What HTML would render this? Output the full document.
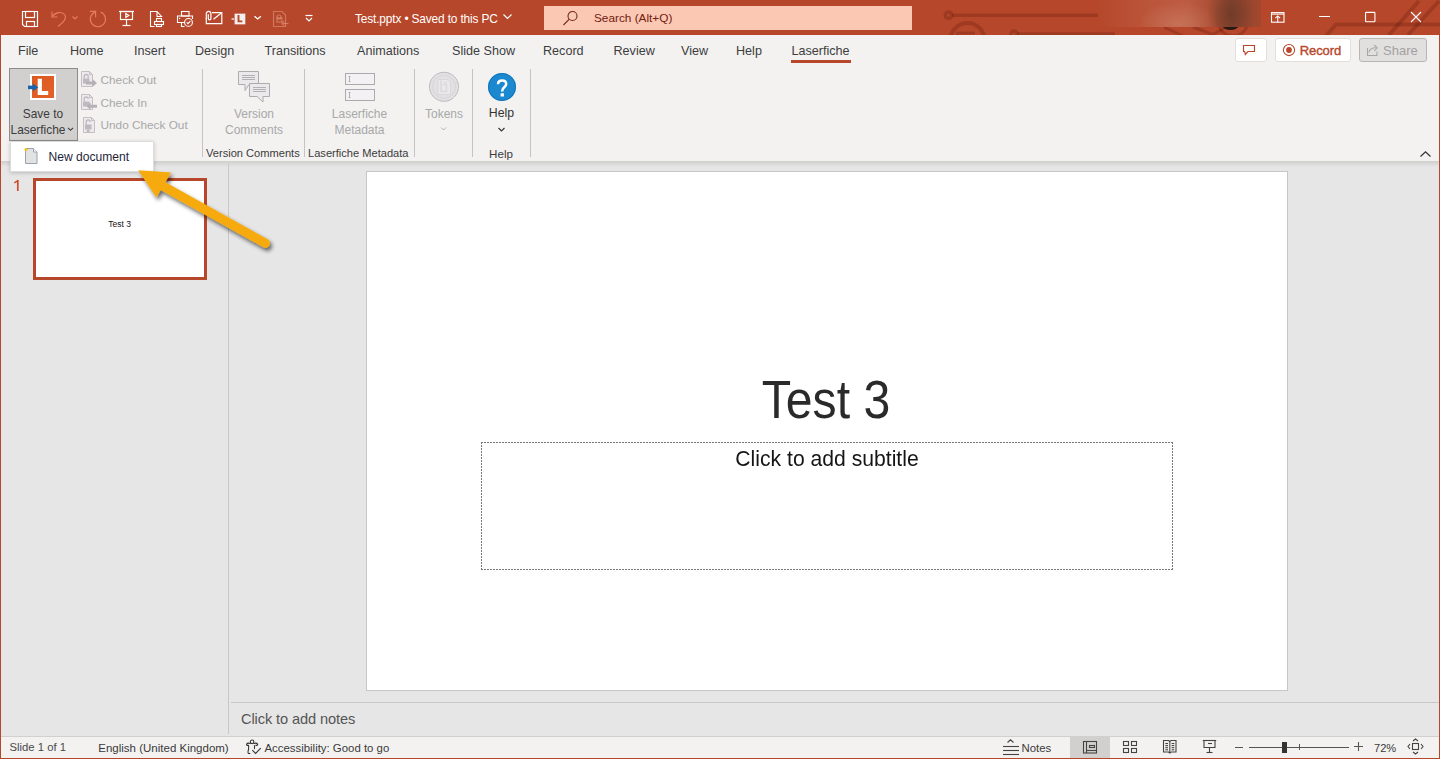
<!DOCTYPE html><html><head><meta charset="utf-8"><style>
html,body{margin:0;padding:0;width:1440px;height:759px;overflow:hidden;background:#E6E6E6;font-family:"Liberation Sans",sans-serif;}
.t{position:absolute;white-space:nowrap;line-height:1;}
svg{overflow:visible}
</style></head><body>
<div style="position:absolute;left:0px;top:0px;width:1440px;height:35px;background:#B7472A"></div>
<svg style="position:absolute;left:900px;top:0px;" width="540" height="35" viewBox="0 0 540 35">
<g fill="none" stroke="rgba(60,10,0,0.2)" stroke-width="3.5">
<circle cx="48.5" cy="15.3" r="3.3" />
<line x1="52" y1="15.3" x2="198" y2="15.3"/>
<circle cx="67.5" cy="40" r="17" stroke-width="4"/>
<path d="M57.5 36 V33 H75" stroke-width="3"/>
<circle cx="114" cy="34" r="3"/>
<line x1="117" y1="34" x2="215" y2="34"/>
<path d="M519 1 L489 35" stroke-width="4"/><path d="M539 1 L508 35" stroke-width="4"/>
<path d="M426 36 L436 24.5 L540 24.5" stroke-width="4"/>
<path d="M264 27 L283 36 M293 27 L312.5 34.5 L330 25" stroke-width="3"/>
<circle cx="333" cy="21" r="15" stroke-width="3"/>
</g></svg>
<div style="position:absolute;left:1222px;top:19px;width:17px;height:11px;border-radius:50%;background:#2a1a14"></div>
<div style="position:absolute;left:1098px;top:0;width:163px;height:27px;background:radial-gradient(ellipse 40px 22px at 80px 24px,rgba(200,120,95,0.75),rgba(200,120,95,0) 100%),radial-gradient(ellipse 24px 34px at 133px 14px,rgba(100,55,38,0.7),rgba(100,55,38,0) 100%),linear-gradient(90deg,#b5482b 0%,#bb553a 30%,#bd5c42 55%,#ac4f35 70%,#8f4630 82%,#984630 90%,#a3482d 100%)"></div>
<svg style="position:absolute;left:21px;top:10px;" width="18" height="18" viewBox="0 0 18 18"><g fill="none" stroke="#ffffff" stroke-width="1.2">
<path d="M1.5 1.5 H16.5 V16.5 H3.5 L1.5 14.5 Z"/>
<rect x="4.5" y="1.5" width="9" height="6"/>
<rect x="5.5" y="11.5" width="8" height="5"/>
</g></svg>
<svg style="position:absolute;left:50px;top:10px;" width="30" height="18" viewBox="0 0 30 18"><g fill="none" stroke="#e57b60" stroke-width="1.2">
<path d="M2 1.5 V7 H7.5"/>
<path d="M2.5 6.5 C5 2 12 1 15 5 C17 8 14 12 8 16.5"/>
<path d="M22.5 6.5 L25 9 L27.5 6.5"/>
</g></svg>
<svg style="position:absolute;left:88px;top:10px;" width="20" height="18" viewBox="0 0 20 18"><g fill="none" stroke="#e57b60" stroke-width="1.2">
<path d="M7.6 1.9 A7.6 7.6 0 1 0 12.8 2.1"/>
<path d="M1.8 1.4 H7.6 V7.2"/>
</g></svg>
<svg style="position:absolute;left:118px;top:10px;" width="18" height="18" viewBox="0 0 18 18"><g fill="none" stroke="#ffffff" stroke-width="1.2">
<line x1="1" y1="1.5" x2="16" y2="1.5"/>
<rect x="2.5" y="1.5" width="12" height="8"/>
<path d="M7.8 3.6 L10.8 5.5 L7.8 7.4 Z"/>
<line x1="8.5" y1="9.5" x2="8.5" y2="15.5"/>
<line x1="4.5" y1="15.5" x2="12.5" y2="15.5"/>
</g></svg>
<svg style="position:absolute;left:149px;top:10px;" width="16" height="18" viewBox="0 0 16 18"><g fill="none" stroke="#ffffff" stroke-width="1.1">
<path d="M5.5 16.5 H1.5 V1.5 H8 L12.5 6.5 H8 V1.5"/>
<rect x="7.5" y="8.5" width="5" height="3"/>
<rect x="5.5" y="11.5" width="9" height="3"/>
<rect x="7.5" y="14.5" width="5" height="2"/>
</g></svg>
<svg style="position:absolute;left:176px;top:10px;" width="18" height="18" viewBox="0 0 18 18"><g fill="none" stroke="#ffffff" stroke-width="1.1">
<rect x="5.5" y="1.5" width="7.5" height="4.5"/>
<path d="M9 12.5 H1.5 V6 H16.5 V9"/>
<path d="M5.5 12.5 V16.5 H8.5"/>
<circle cx="12.5" cy="12.4" r="3.9"/>
<path d="M10.7 12.4 L12 13.7 L14.4 11.1"/>
</g><circle cx="3.6" cy="8.5" r="0.7" fill="#ffffff"/></svg>
<svg style="position:absolute;left:205px;top:10px;" width="18" height="16" viewBox="0 0 18 16"><g fill="none" stroke="#ffffff" stroke-width="1.2">
<path d="M1.3 8 V13.7 H16.8 V2.6 H7"/>
<path d="M8.5 9.2 L16.3 3"/>
<path d="M1.3 9.3 V3.6 A2.3 2.3 0 0 1 5.9 3.6 V8.6 A1.3 1.3 0 0 1 3.3 8.6 V4.3"/>
</g></svg>
<svg style="position:absolute;left:231px;top:12px;" width="16" height="14" viewBox="0 0 16 14"><rect x="3.2" y="1.25" width="11.5" height="11.5" fill="rgba(255,255,255,0.18)"/><rect x="3.7" y="1.75" width="10.5" height="10.5" fill="#f3efee"/>
<path d="M7.5 3 V9.4 H11.3" fill="none" stroke="#B7472A" stroke-width="1.9"/>
<path d="M0.5 7 H3" stroke="#ffffff" stroke-width="1.2"/></svg>
<svg style="position:absolute;left:253px;top:14px;" width="10" height="7" viewBox="0 0 10 7"><path d="M1.5 2.2 L4.7 5 L7.9 2.2" fill="none" stroke="#ffffff" stroke-width="1.3"/></svg>
<svg style="position:absolute;left:272px;top:10px;" width="18" height="18" viewBox="0 0 18 18"><g fill="none" stroke="rgba(255,210,195,0.35)" stroke-width="1.2">
<path d="M1.5 1.5 H10 L13.5 5 V16.5 H1.5 Z"/>
<circle cx="7" cy="7" r="2"/>
<rect x="5" y="8" width="5" height="4"/>
<path d="M16.5 13.5 H10 M12 11.5 L10 13.5 L12 15.5"/>
</g></svg>
<svg style="position:absolute;left:304px;top:13px;" width="10" height="10" viewBox="0 0 10 10"><g fill="none" stroke="#ffffff" stroke-width="1.2">
<line x1="1.5" y1="2.5" x2="8.5" y2="2.5"/>
<path d="M2 5 L5 8 L8 5"/>
</g></svg>
<div class="t" style="left:355px;top:14.13px;font-size:11.9px;color:#ffffff;letter-spacing:-0.15px">Test.pptx &#8226; Saved to this PC</div>
<svg style="position:absolute;left:502px;top:12px;" width="12" height="10" viewBox="0 0 12 10"><path d="M1.5 2.5 L5.5 6.5 L9.5 2.5" fill="none" stroke="#ffffff" stroke-width="1.2"/></svg>
<div style="position:absolute;left:544px;top:6px;width:368px;height:24px;background:#FBC8B4"></div>
<svg style="position:absolute;left:562px;top:10px;" width="18" height="17" viewBox="0 0 18 17"><g fill="none" stroke="#6e2a1a" stroke-width="1.1">
<circle cx="10.5" cy="6" r="4.5"/><line x1="7.3" y1="9.2" x2="1.5" y2="15"/></g></svg>
<div class="t" style="left:594px;top:13.11px;font-size:11.8px;color:#72200f;">Search (Alt+Q)</div>
<svg style="position:absolute;left:1270px;top:11px;" width="16" height="12" viewBox="0 0 16 12"><g fill="none" stroke="#ffffff" stroke-width="1.1">
<rect x="1.5" y="1.6" width="12.5" height="9.6"/><line x1="1.5" y1="3.1" x2="14" y2="3.1"/>
<line x1="7.75" y1="5" x2="7.75" y2="11.2"/><path d="M5.4 7.2 L7.75 4.9 L10.1 7.2"/></g></svg>
<div style="position:absolute;left:1319px;top:16px;width:10.5px;height:1.1px;background:#fff"></div>
<svg style="position:absolute;left:1364px;top:11px;" width="12" height="12" viewBox="0 0 12 12"><rect x="1.55" y="1.35" width="9.4" height="9.4" rx="0.8" fill="none" stroke="#ffffff" stroke-width="1.1"/></svg>
<svg style="position:absolute;left:1410px;top:11px;" width="13" height="13" viewBox="0 0 13 13"><path d="M1 1 L11 11 M11 1 L1 11" fill="none" stroke="#ffffff" stroke-width="1.1"/></svg>
<div style="position:absolute;left:0px;top:35px;width:1px;height:724px;background:#B7472A"></div>
<div style="position:absolute;left:1439px;top:35px;width:1px;height:724px;background:#B7472A"></div>
<div style="position:absolute;left:0px;top:758px;width:1440px;height:1px;background:#B7472A"></div>
<div style="position:absolute;left:1px;top:35px;width:1438px;height:126px;background:#F3F2F1"></div>
<div style="position:absolute;left:1px;top:161px;width:1438px;height:6px;background:linear-gradient(#cfcecd,#e6e6e6)"></div>
<div class="t" style="left:18px;top:45.23px;font-size:12.6px;color:#3d3d3d;">File</div>
<div class="t" style="left:70px;top:45.23px;font-size:12.6px;color:#3d3d3d;">Home</div>
<div class="t" style="left:134px;top:45.23px;font-size:12.6px;color:#3d3d3d;">Insert</div>
<div class="t" style="left:195px;top:45.23px;font-size:12.6px;color:#3d3d3d;">Design</div>
<div class="t" style="left:264.5px;top:45.23px;font-size:12.6px;color:#3d3d3d;">Transitions</div>
<div class="t" style="left:357px;top:45.23px;font-size:12.6px;color:#3d3d3d;">Animations</div>
<div class="t" style="left:452px;top:45.23px;font-size:12.6px;color:#3d3d3d;">Slide Show</div>
<div class="t" style="left:543px;top:45.23px;font-size:12.6px;color:#3d3d3d;">Record</div>
<div class="t" style="left:613.5px;top:45.23px;font-size:12.6px;color:#3d3d3d;">Review</div>
<div class="t" style="left:681px;top:45.23px;font-size:12.6px;color:#3d3d3d;">View</div>
<div class="t" style="left:736px;top:45.23px;font-size:12.6px;color:#3d3d3d;">Help</div>
<div class="t" style="left:791.5px;top:45.23px;font-size:12.6px;color:#3d3d3d;">Laserfiche</div>
<div style="position:absolute;left:791px;top:60px;width:60px;height:3px;background:#B7472A"></div>
<div style="position:absolute;left:1235px;top:38px;width:32px;height:24px;background:#fff;border:1px solid #e1dfdd;box-sizing:border-box;border-radius:3px"></div>
<svg style="position:absolute;left:1242px;top:44px;" width="14" height="12" viewBox="0 0 14 12"><path d="M1.5 1.5 H12.5 V7.5 H6 L3.3 10.5 L2.7 7.5 H1.5 Z" fill="none" stroke="#B7472A" stroke-width="1.15"/></svg>
<div style="position:absolute;left:1275px;top:38px;width:76px;height:24px;background:#fff;border:1px solid #e1dfdd;box-sizing:border-box;border-radius:3px"></div>
<svg style="position:absolute;left:1282px;top:43px;" width="14" height="14" viewBox="0 0 14 14"><circle cx="7" cy="7" r="5.6" fill="none" stroke="#B7472A" stroke-width="1.05"/><circle cx="7" cy="7" r="2.9" fill="#B7472A"/></svg>
<div class="t" style="left:1299.8px;top:44.00px;font-size:13px;color:#B7472A;-webkit-text-stroke:0.4px #B7472A;letter-spacing:-0.1px">Record</div>
<div style="position:absolute;left:1359px;top:38px;width:68px;height:24px;background:#E1E0DF;border:1px solid #b9b7b5;box-sizing:border-box;border-radius:3px"></div>
<svg style="position:absolute;left:1365px;top:43px;" width="16" height="16" viewBox="0 0 16 16"><g fill="none" stroke="#a9a7a5" stroke-width="1.05">
<path d="M2.5 5 V12.5 H12 V8.5"/><path d="M3.8 9.5 C4.5 6.5 7 4.8 11 4.8"/><path d="M9 1.8 L12.3 4.8 L9.3 7.8"/></g></svg>
<div class="t" style="left:1383px;top:44.00px;font-size:13px;color:#a3a19f;">Share</div>
<div style="position:absolute;left:9px;top:68px;width:69px;height:73px;background:#D1D0CF;border:1px solid #8d8c8b;box-sizing:border-box"></div>
<div style="position:absolute;left:30px;top:74px;width:26px;height:26px;background:#fff"></div>
<div style="position:absolute;left:32px;top:76px;width:22px;height:22px;background:linear-gradient(135deg,#dc5a22,#e2622a)"></div>
<svg style="position:absolute;left:32px;top:76px;" width="22" height="22" viewBox="0 0 22 22"><path d="M5.7 2.7 H9.9 V14.9 H16.2 V19 H5.7 Z" fill="#fff"/></svg>
<svg style="position:absolute;left:28px;top:83px;" width="12" height="9" viewBox="0 0 12 9"><path d="M0 4.4 H6" stroke="#1a64ad" stroke-width="3.6"/><path d="M5 0.6 L10.3 4.4 L5 8.2 Z" fill="#1a64ad"/></svg>
<div class="t" style="left:-257px;width:600px;text-align:center;top:109.23px;font-size:11.9px;color:#3b3b3b;">Save to</div>
<div class="t" style="left:-262px;width:600px;text-align:center;top:125.23px;font-size:11.9px;color:#3b3b3b;">Laserfiche</div>
<svg style="position:absolute;left:67px;top:126px;" width="8" height="6" viewBox="0 0 8 6"><path d="M1 1.8 L3.5 4.3 L6 1.8" fill="none" stroke="#3b3b3b" stroke-width="1.1"/></svg>
<div class="t" style="left:100.5px;top:74.71px;font-size:11.8px;color:#a8a8a8;">Check Out</div>
<div class="t" style="left:100.5px;top:97.51px;font-size:11.8px;color:#a8a8a8;">Check In</div>
<div class="t" style="left:100.5px;top:120.21px;font-size:11.8px;color:#a8a8a8;">Undo Check Out</div>
<svg style="position:absolute;left:81px;top:71px;" width="17" height="17" viewBox="0 0 17 17"><path d="M0.5 0.5 H8.5 L11.5 3.5 V15.5 H0.5 Z" fill="#ede9ee" stroke="#c3bfc3" stroke-width="1"/>
<path d="M8.5 0.5 V3.5 H11.5" fill="none" stroke="#c3bfc3" stroke-width="1"/>
<rect x="2" y="7.5" width="6.5" height="5" fill="#bdbabd"/><path d="M3.2 7.5 V5.5 A2 2 0 0 1 7.2 5.5 V7.5" fill="none" stroke="#bdbabd" stroke-width="1.3"/><path d="M5 10.5 H11.5 V8 L16 12 L11.5 16 V13.5 H5 Z" fill="#b5b2b5"/></svg>
<svg style="position:absolute;left:81px;top:94px;" width="17" height="17" viewBox="0 0 17 17"><path d="M0.5 0.5 H8.5 L11.5 3.5 V15.5 H0.5 Z" fill="#ede9ee" stroke="#c3bfc3" stroke-width="1"/>
<path d="M8.5 0.5 V3.5 H11.5" fill="none" stroke="#c3bfc3" stroke-width="1"/>
<rect x="2" y="7.5" width="6.5" height="5" fill="#bdbabd"/><path d="M3.2 7.5 V5 A2 2 0 0 1 7.2 5" fill="none" stroke="#bdbabd" stroke-width="1.3"/><path d="M16 10.8 H9.5 V8.5 L5.5 12.2 L9.5 16 V13.7 H16 Z" fill="#b5b2b5"/></svg>
<svg style="position:absolute;left:83px;top:117px;" width="17" height="17" viewBox="0 0 17 17"><path d="M0.5 0.5 H8.5 L11.5 3.5 V15.5 H0.5 Z" fill="#ede9ee" stroke="#c3bfc3" stroke-width="1"/>
<path d="M8.5 0.5 V3.5 H11.5" fill="none" stroke="#c3bfc3" stroke-width="1"/>
<rect x="2" y="7.5" width="6.5" height="5" fill="#bdbabd"/><path d="M3.2 7.5 V5 A2 2 0 0 1 7.2 5" fill="none" stroke="#bdbabd" stroke-width="1.3"/><circle cx="5.2" cy="14" r="1.6" fill="#bdbabd"/></svg>
<div style="position:absolute;left:202px;top:69px;width:1px;height:88px;background:#c5c4c3"></div>
<div style="position:absolute;left:304px;top:69px;width:1px;height:88px;background:#c5c4c3"></div>
<div style="position:absolute;left:414px;top:69px;width:1px;height:88px;background:#c5c4c3"></div>
<div style="position:absolute;left:472px;top:69px;width:1px;height:88px;background:#c5c4c3"></div>
<div style="position:absolute;left:530px;top:69px;width:1px;height:88px;background:#c5c4c3"></div>
<svg style="position:absolute;left:230px;top:66px;" width="50" height="40" viewBox="0 0 50 40"><g stroke="#aeabae" stroke-width="1" fill="#ece9ed" stroke-linejoin="miter">
<path d="M8.5 5.5 H28.5 V18.5 H19 L15 24.5 L15 18.5 H8.5 Z"/>
<path d="M19.5 17.5 H39.5 V30.5 H33 V36 L27 30.5 H19.5 Z"/></g>
<g stroke="#b3b0b3" stroke-width="1"><line x1="12" y1="9.5" x2="25" y2="9.5"/><line x1="12" y1="11.5" x2="25" y2="11.5"/><line x1="12" y1="13.5" x2="25" y2="13.5"/>
<line x1="23" y1="21.5" x2="36" y2="21.5"/><line x1="23" y1="23.5" x2="36" y2="23.5"/><line x1="23" y1="25.5" x2="36" y2="25.5"/></g></svg>
<div class="t" style="left:-46px;width:600px;text-align:center;top:108.14px;font-size:12px;color:#a8a8a8;">Version</div>
<div class="t" style="left:-46px;width:600px;text-align:center;top:123.64px;font-size:12px;color:#a8a8a8;">Comments</div>
<div class="t" style="left:206px;top:148.10px;font-size:11.1px;color:#3b3b3b;">Version Comments</div>
<svg style="position:absolute;left:344px;top:72px;" width="32" height="30" viewBox="0 0 32 30"><g stroke="#acaaac" stroke-width="1" fill="#f4f1f5">
<rect x="1.5" y="1.5" width="29" height="11"/><rect x="1.5" y="17.5" width="29" height="11"/></g>
<g stroke="#acaaac" stroke-width="0.9" fill="none"><path d="M4.5 4.5 H6.5 M5.5 4.5 V9.5 M4.5 9.5 H6.5"/><path d="M4.5 20.5 H6.5 M5.5 20.5 V25.5 M4.5 25.5 H6.5"/></g></svg>
<div class="t" style="left:59.5px;width:600px;text-align:center;top:108.14px;font-size:12px;color:#a8a8a8;">Laserfiche</div>
<div class="t" style="left:59.5px;width:600px;text-align:center;top:123.64px;font-size:12px;color:#a8a8a8;">Metadata</div>
<div class="t" style="left:308px;top:148.10px;font-size:11.1px;color:#3b3b3b;">Laserfiche Metadata</div>
<svg style="position:absolute;left:424px;top:66px;" width="40" height="40" viewBox="0 0 40 40"><circle cx="20" cy="20.8" r="14.5" fill="#e3e0e3" stroke="#a9a7a9" stroke-width="1" stroke-dasharray="1.5 0.6"/>
<circle cx="20" cy="20.8" r="11.5" fill="none" stroke="#d9d6d9" stroke-width="1"/>
<path d="M14 13.5 H24 L26.5 16 V28.5 H14 Z" fill="#ebe8eb" stroke="#d6d3d6" stroke-width="0.8"/>
<path d="M17 14.5 V25.5 H22.5 V18.5 H18.5" fill="none" stroke="#dcd9dc" stroke-width="1.6"/>
<path d="M20 16.5 H23" stroke="#dcd9dc" stroke-width="1.2"/></svg>
<div class="t" style="left:144px;width:600px;text-align:center;top:107.74px;font-size:12px;color:#a8a8a8;">Tokens</div>
<svg style="position:absolute;left:440px;top:126px;" width="8" height="6" viewBox="0 0 8 6"><path d="M1 1.5 L3.5 4 L6 1.5" fill="none" stroke="#b3b3b3" stroke-width="1"/></svg>
<svg style="position:absolute;left:487px;top:72px;" width="30" height="30" viewBox="0 0 30 30"><circle cx="15" cy="15" r="14" fill="#1B88D0"/><circle cx="15" cy="15" r="13.5" fill="none" stroke="#0f6fb0" stroke-width="0.8"/></svg>
<svg style="position:absolute;left:487px;top:72px;" width="30" height="30" viewBox="0 0 30 30"><path d="M11 12.3 C11 9.8 12.8 8.5 15.1 8.5 C17.5 8.5 19.2 10 19.2 12.1 C19.2 15.1 15.3 15.4 15.3 18.5 V19.4" fill="none" stroke="#fff" stroke-width="2.5"/><rect x="13.6" y="21.3" width="3.3" height="3.2" fill="#fff"/></svg>
<div class="t" style="left:201.5px;width:600px;text-align:center;top:107.49px;font-size:12.3px;color:#333;">Help</div>
<svg style="position:absolute;left:497px;top:127px;" width="10" height="7" viewBox="0 0 10 7"><path d="M1.5 1 L4.5 4 L7.5 1" fill="none" stroke="#333" stroke-width="1.1"/></svg>
<div class="t" style="left:201px;width:600px;text-align:center;top:147.98px;font-size:11.6px;color:#3b3b3b;">Help</div>
<svg style="position:absolute;left:1419px;top:150px;" width="14" height="9" viewBox="0 0 14 9"><path d="M1.5 6.5 L6.5 1.8 L11.5 6.5" fill="none" stroke="#333" stroke-width="1.2"/></svg>
<div style="position:absolute;left:228px;top:164px;width:1px;height:570px;background:#c8c8c8"></div>
<svg style="position:absolute;left:12px;top:178px;" width="10" height="15" viewBox="0 0 10 15"><path d="M5.8 2.2 V13" stroke="#D24B2A" stroke-width="1.7"/><path d="M6.3 2.3 L2.3 4.8" stroke="#D24B2A" stroke-width="1.4"/></svg>
<div style="position:absolute;left:33px;top:178px;width:174px;height:102px;background:#B7472A"></div>
<div style="position:absolute;left:36px;top:181px;width:168px;height:96px;background:#fff"></div>
<div class="t" style="left:-180.4px;width:600px;text-align:center;top:219.90px;font-size:8.5px;color:#111;">Test 3</div>
<div style="position:absolute;left:366px;top:171px;width:922px;height:520px;background:#fff;border:1px solid #c6c6c6;box-sizing:border-box"></div>
<div class="t" style="left:526px;width:600px;text-align:center;top:372.61px;font-size:53.5px;color:#2a2a2a;transform:scaleX(0.9);transform-origin:center">Test 3</div>
<div style="position:absolute;left:481px;top:442px;width:692px;height:1px;background:repeating-linear-gradient(90deg,#777 0 2px,transparent 2px 3px)"></div>
<div style="position:absolute;left:481px;top:569px;width:692px;height:1px;background:repeating-linear-gradient(90deg,#777 0 2px,transparent 2px 3px)"></div>
<div style="position:absolute;left:481px;top:442px;width:1px;height:128px;background:repeating-linear-gradient(180deg,#777 0 2px,transparent 2px 3px)"></div>
<div style="position:absolute;left:1172px;top:442px;width:1px;height:128px;background:repeating-linear-gradient(180deg,#777 0 2px,transparent 2px 3px)"></div>
<div class="t" style="left:527px;width:600px;text-align:center;top:447.95px;font-size:21.8px;color:#151515;transform:scaleX(0.97)">Click to add subtitle</div>
<div style="position:absolute;left:231px;top:702px;width:1208px;height:1px;background:#c6c6c6"></div>
<div class="t" style="left:241px;top:711.94px;font-size:14.6px;color:#555;letter-spacing:-0.1px">Click to add notes</div>
<div style="position:absolute;left:1px;top:736px;width:1438px;height:1px;background:#d2d0ce"></div>
<div style="position:absolute;left:1px;top:737px;width:1438px;height:21px;background:#F3F2F1"></div>
<div class="t" style="left:9.5px;top:742.33px;font-size:11.3px;color:#4a4a4a;">Slide 1 of 1</div>
<div class="t" style="left:98.3px;top:742.77px;font-size:11.5px;color:#3a3a3a;">English (United Kingdom)</div>
<svg style="position:absolute;left:244px;top:738px;" width="18" height="18" viewBox="0 0 18 18"><g fill="none" stroke="#333" stroke-width="1.05" stroke-linecap="round">
<circle cx="8.1" cy="3.8" r="1.8"/><path d="M6.4 5.4 Q3.2 4.6 2.6 6.2 Q2.4 7.6 4.5 7.3"/><path d="M9.8 5.4 Q13 4.6 13.6 6.2 Q13.8 7.6 11.7 7.3"/>
<path d="M4.6 7.4 V11 Q3.6 14.6 4.2 15.2 Q4.6 15.7 5.9 15.4"/><path d="M10.5 7.5 V10.6"/><path d="M8.6 12.3 L11.6 15.4 L16.5 10.3"/></g></svg>
<div class="t" style="left:264.5px;top:742.75px;font-size:11.4px;color:#3a3a3a;">Accessibility: Good to go</div>
<svg style="position:absolute;left:1002px;top:738px;" width="18" height="18" viewBox="0 0 18 18"><g fill="none" stroke="#444" stroke-width="1.1">
<path d="M5.5 4.5 L8.5 1.8 L11.5 4.5"/><line x1="1" y1="8.5" x2="17" y2="8.5"/><line x1="1" y1="12.5" x2="17" y2="12.5"/><line x1="1" y1="16.5" x2="17" y2="16.5"/></g></svg>
<div class="t" style="left:1021.5px;top:743.05px;font-size:11.4px;color:#3a3a3a;">Notes</div>
<div style="position:absolute;left:1070px;top:737px;width:40px;height:21px;background:#D2D0CE"></div>
<svg style="position:absolute;left:1082px;top:740px;" width="16" height="14" viewBox="0 0 16 14"><g fill="none" stroke="#444" stroke-width="1.1">
<rect x="1.5" y="1.5" width="13" height="11.5"/><line x1="4.5" y1="1.5" x2="4.5" y2="13"/><line x1="4.5" y1="10.5" x2="14.5" y2="10.5"/><rect x="7.5" y="5.5" width="5" height="2"/></g></svg>
<svg style="position:absolute;left:1122px;top:740px;" width="16" height="14" viewBox="0 0 16 14"><g fill="none" stroke="#444" stroke-width="1.1">
<rect x="1.5" y="1.5" width="5" height="4"/><rect x="9.5" y="1.5" width="5" height="4"/><rect x="1.5" y="8.5" width="5" height="4"/><rect x="9.5" y="8.5" width="5" height="4"/></g></svg>
<svg style="position:absolute;left:1162px;top:739px;" width="16" height="15" viewBox="0 0 16 15"><g fill="none" stroke="#444" stroke-width="1.1">
<path d="M1.5 1.5 H6.5 L7.8 2.5 L9.1 1.5 H14 V13 H9.1 L7.8 14 L6.5 13 H1.5 Z"/><line x1="7.8" y1="2.5" x2="7.8" y2="13.5"/>
<line x1="3.3" y1="4.5" x2="6" y2="4.5"/><line x1="3.3" y1="6.6" x2="6" y2="6.6"/><line x1="3.3" y1="8.7" x2="6" y2="8.7"/><line x1="3.3" y1="10.8" x2="6" y2="10.8"/>
<line x1="9.6" y1="4.5" x2="12.3" y2="4.5"/><line x1="9.6" y1="6.6" x2="12.3" y2="6.6"/><line x1="9.6" y1="8.7" x2="12.3" y2="8.7"/><line x1="9.6" y1="10.8" x2="12.3" y2="10.8"/></g></svg>
<svg style="position:absolute;left:1202px;top:739px;" width="16" height="15" viewBox="0 0 16 15"><g fill="none" stroke="#444" stroke-width="1.1">
<line x1="0.8" y1="1.5" x2="14.2" y2="1.5"/><path d="M2 1.5 V8.5 H13 V1.5"/><line x1="6" y1="4.5" x2="10" y2="4.5"/><line x1="7.5" y1="8.5" x2="7.5" y2="13.5"/><line x1="4.5" y1="13.5" x2="10.5" y2="13.5"/></g></svg>
<div style="position:absolute;left:1235px;top:747px;width:8px;height:1px;background:#555"></div>
<div style="position:absolute;left:1249px;top:747px;width:100px;height:1px;background:#555"></div>
<div style="position:absolute;left:1282px;top:742px;width:5px;height:11px;background:#333"></div>
<div style="position:absolute;left:1299px;top:744px;width:1px;height:6px;background:#555"></div>
<svg style="position:absolute;left:1353px;top:741px;" width="12" height="12" viewBox="0 0 12 12"><path d="M5.5 1 V10 M1 5.5 H10" stroke="#555" stroke-width="1.1"/></svg>
<div class="t" style="left:1374px;top:742.90px;font-size:11.1px;color:#3a3a3a;">72%</div>
<svg style="position:absolute;left:1407px;top:738px;" width="18" height="18" viewBox="0 0 18 18"><g fill="none" stroke="#444" stroke-width="1.1">
<rect x="5.5" y="5.5" width="6" height="6"/><path d="M6 3 L8.5 1 L11 3"/><path d="M6 14 L8.5 16 L11 14"/><path d="M3 6 L1 8.5 L3 11"/><path d="M14 6 L16 8.5 L14 11"/></g></svg>
<div style="position:absolute;left:10px;top:141px;width:144px;height:31px;background:#fff;border:1px solid #dcdcdc;box-sizing:border-box;box-shadow:0 1px 4px rgba(0,0,0,0.2);"></div>
<svg style="position:absolute;left:23.5px;top:147px;" width="16" height="18" viewBox="0 0 16 18"><path d="M1.5 1.5 H9.5 L13 5 V16.5 H1.5 Z" fill="#e2e2e2" stroke="#98a2b0" stroke-width="1"/>
<path d="M9.5 1.5 V5 H13" fill="#fff" stroke="#98a2b0" stroke-width="1"/><circle cx="2" cy="2.5" r="1.6" fill="#f5c518"/></svg>
<div class="t" style="left:48.5px;top:150.96px;font-size:12.1px;color:#1f1f3a;">New document</div>
<svg style="position:absolute;left:120px;top:155px;" width="170" height="110" viewBox="0 0 170 110"><defs><filter id="sh" x="-20%" y="-20%" width="140%" height="140%"><feGaussianBlur in="SourceAlpha" stdDeviation="2"/><feOffset dx="2" dy="3"/><feComponentTransfer><feFuncA type="linear" slope="0.6"/></feComponentTransfer><feMerge><feMergeNode/><feMergeNode in="SourceGraphic"/></feMerge></filter></defs>
<g filter="url(#sh)"><line x1="33" y1="25.5" x2="145.5" y2="88.3" stroke="#F6AA0C" stroke-width="9" stroke-linecap="round"/>
<path d="M18.2 15.3 L51.1 17.5 L36.4 42.6 Z" fill="#F6AA0C"/></g></svg>
</body></html>
